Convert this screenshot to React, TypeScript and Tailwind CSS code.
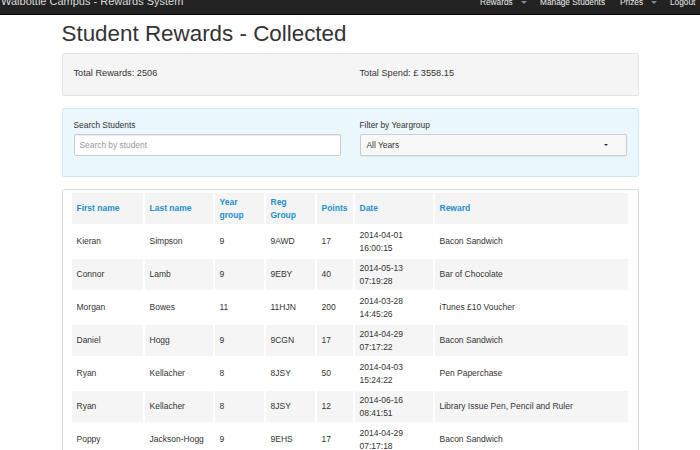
// Rewards System — collected rewards overview: totals, filters and the table
import { useState } from 'react';

interface Reward {
  first: string; last: string; year: string; reg: string;
  points: string; date: string; time: string; reward: string;
}

const rows: Reward[] = [
  { first: 'Kieran', last: 'Simpson', year: '9', reg: '9AWD', points: '17', date: '2014-04-01', time: '16:00:15', reward: 'Bacon Sandwich' },
  { first: 'Connor', last: 'Lamb', year: '9', reg: '9EBY', points: '40', date: '2014-05-13', time: '07:19:28', reward: 'Bar of Chocolate' },
  { first: 'Morgan', last: 'Bowes', year: '11', reg: '11HJN', points: '200', date: '2014-03-28', time: '14:45:26', reward: 'iTunes £10 Voucher' },
  { first: 'Daniel', last: 'Hogg', year: '9', reg: '9CGN', points: '17', date: '2014-04-29', time: '07:17:22', reward: 'Bacon Sandwich' },
  { first: 'Ryan', last: 'Kellacher', year: '8', reg: '8JSY', points: '50', date: '2014-04-03', time: '15:24:22', reward: 'Pen Paperchase' },
  { first: 'Ryan', last: 'Kellacher', year: '8', reg: '8JSY', points: '12', date: '2014-06-16', time: '08:41:51', reward: 'Library Issue Pen, Pencil and Ruler' },
  { first: 'Poppy', last: 'Jackson-Hogg', year: '9', reg: '9EHS', points: '17', date: '2014-04-29', time: '07:17:18', reward: 'Bacon Sandwich' },
];

function Caret() {
  return <span className="ml-[8px] inline-block h-0 w-0 border-x-[3px] border-t-[3px] border-x-transparent border-t-[#888] align-middle" />;
}

export default function App() {
  const [query, setQuery] = useState('');
  const [year, setYear] = useState('all');

  return (
    <div className="min-h-[450px] bg-white font-['Liberation_Sans',Arial,sans-serif] text-[#333]">
      {/* navbar (scrolled, only the bottom strip shows) */}
      <div className="h-[15px] overflow-hidden border-b border-[#080808] bg-[#222]">
        <div className="flex items-start justify-between">
          <span className="ml-[1px] mt-[-4px] text-[11px] leading-[11px] text-[#ddd]">Walbottle Campus - Rewards System</span>
          <div className="mt-[-3px] flex w-[220px] text-[8.3px] leading-[10px] text-[#eee]">
            <span className="w-[60px]">Rewards<Caret /></span>
            <span className="w-[80px]">Manage Students</span>
            <span className="w-[50px]">Prizes<Caret /></span>
            <span className="w-[30px]">Logout</span>
          </div>
        </div>
      </div>

      <div className="mx-auto w-[577px]">
        <h1 className="mt-[5px] mb-[5px] text-[22.4px] leading-[28px] text-[#333]">Student Rewards - Collected</h1>

        <div className="grid h-[43px] grid-cols-2 items-center gap-[19px] rounded-[2px] border border-[#e3e3e3] bg-[#f5f5f5] px-[11px] pb-[2px] text-[9.2px]">
          <span>Total Rewards: 2506</span>
          <span>Total Spend: £ 3558.15</span>
        </div>

        <div className="mt-[12px] grid h-[69px] grid-cols-2 gap-[19px] rounded-[2px] border border-[#cfeaf7] bg-[#eaf7fd] px-[11px] pt-[10px]">
          <div>
            <label className="block text-[8.4px] leading-[12px]">Search Students</label>
            <input
              value={query}
              onChange={(e) => setQuery(e.target.value)}
              placeholder="Search by student"
              className="mt-[3px] h-[22px] w-full rounded-[2px] border border-[#ccc] bg-white px-[5px] text-[8.4px] shadow-[inset_0_1px_1px_rgba(0,0,0,0.075)] placeholder:text-[#999] focus:outline-none"
            />
          </div>
          <div>
            <label className="block text-[8.4px] leading-[12px]">Filter by Yeargroup</label>
            <button
              onClick={() => setYear('all')}
              className="mt-[3px] flex h-[22px] w-full items-center justify-between rounded-[2px] border border-[#ccc] bg-[#f8f8f8] px-[6px] text-[8.4px] text-[#333] shadow-[0_1px_1px_rgba(0,0,0,0.06)]"
            >
              <span>{year === 'all' ? 'All Years' : year}</span>
              <span className="mr-[12px] inline-block h-0 w-0 border-x-[2px] border-t-[2.5px] border-x-transparent border-t-[#333]" />
            </button>
          </div>
        </div>

        <div className="mt-[12px] rounded-t-[2px] border border-b-0 border-[#ddd] bg-white px-[7px] pt-[1px]">
          <table className="w-[560px] table-fixed border-separate border-spacing-[2px] text-[8.5px] leading-[12.5px]">
            <colgroup>
              <col className="w-[71px]" />
              <col className="w-[68px]" />
              <col className="w-[49px]" />
              <col className="w-[49px]" />
              <col className="w-[36px]" />
              <col className="w-[78px]" />
              <col />
            </colgroup>
            <thead>
              <tr className="text-left font-bold text-[#2490c8]">
                <th className="h-[31px] bg-[#f4f4f4] px-[5px] align-middle">First name</th>
                <th className="bg-[#f4f4f4] px-[5px] align-middle">Last name</th>
                <th className="bg-[#f4f4f4] px-[5px] align-middle">Year group</th>
                <th className="bg-[#f4f4f4] px-[5px] align-middle">Reg Group</th>
                <th className="bg-[#f4f4f4] px-[5px] align-middle">Points</th>
                <th className="bg-[#f4f4f4] px-[5px] align-middle">Date</th>
                <th className="bg-[#f4f4f4] px-[5px] align-middle">Reward</th>
              </tr>
            </thead>
            <tbody>
              {rows.map((r, i) => (
                <tr key={i} className={i % 2 === 1 ? 'bg-[#f5f5f5]' : ''}>
                  <td className="h-[31px] px-[5px] align-middle">{r.first}</td>
                  <td className="px-[5px] align-middle">{r.last}</td>
                  <td className="px-[5px] align-middle">{r.year}</td>
                  <td className="px-[5px] align-middle">{r.reg}</td>
                  <td className="px-[5px] align-middle">{r.points}</td>
                  <td className="px-[5px] align-middle">{r.date}<br />{r.time}</td>
                  <td className="px-[5px] align-middle">{r.reward}</td>
                </tr>
              ))}
            </tbody>
          </table>
        </div>
      </div>
    </div>
  );
}
